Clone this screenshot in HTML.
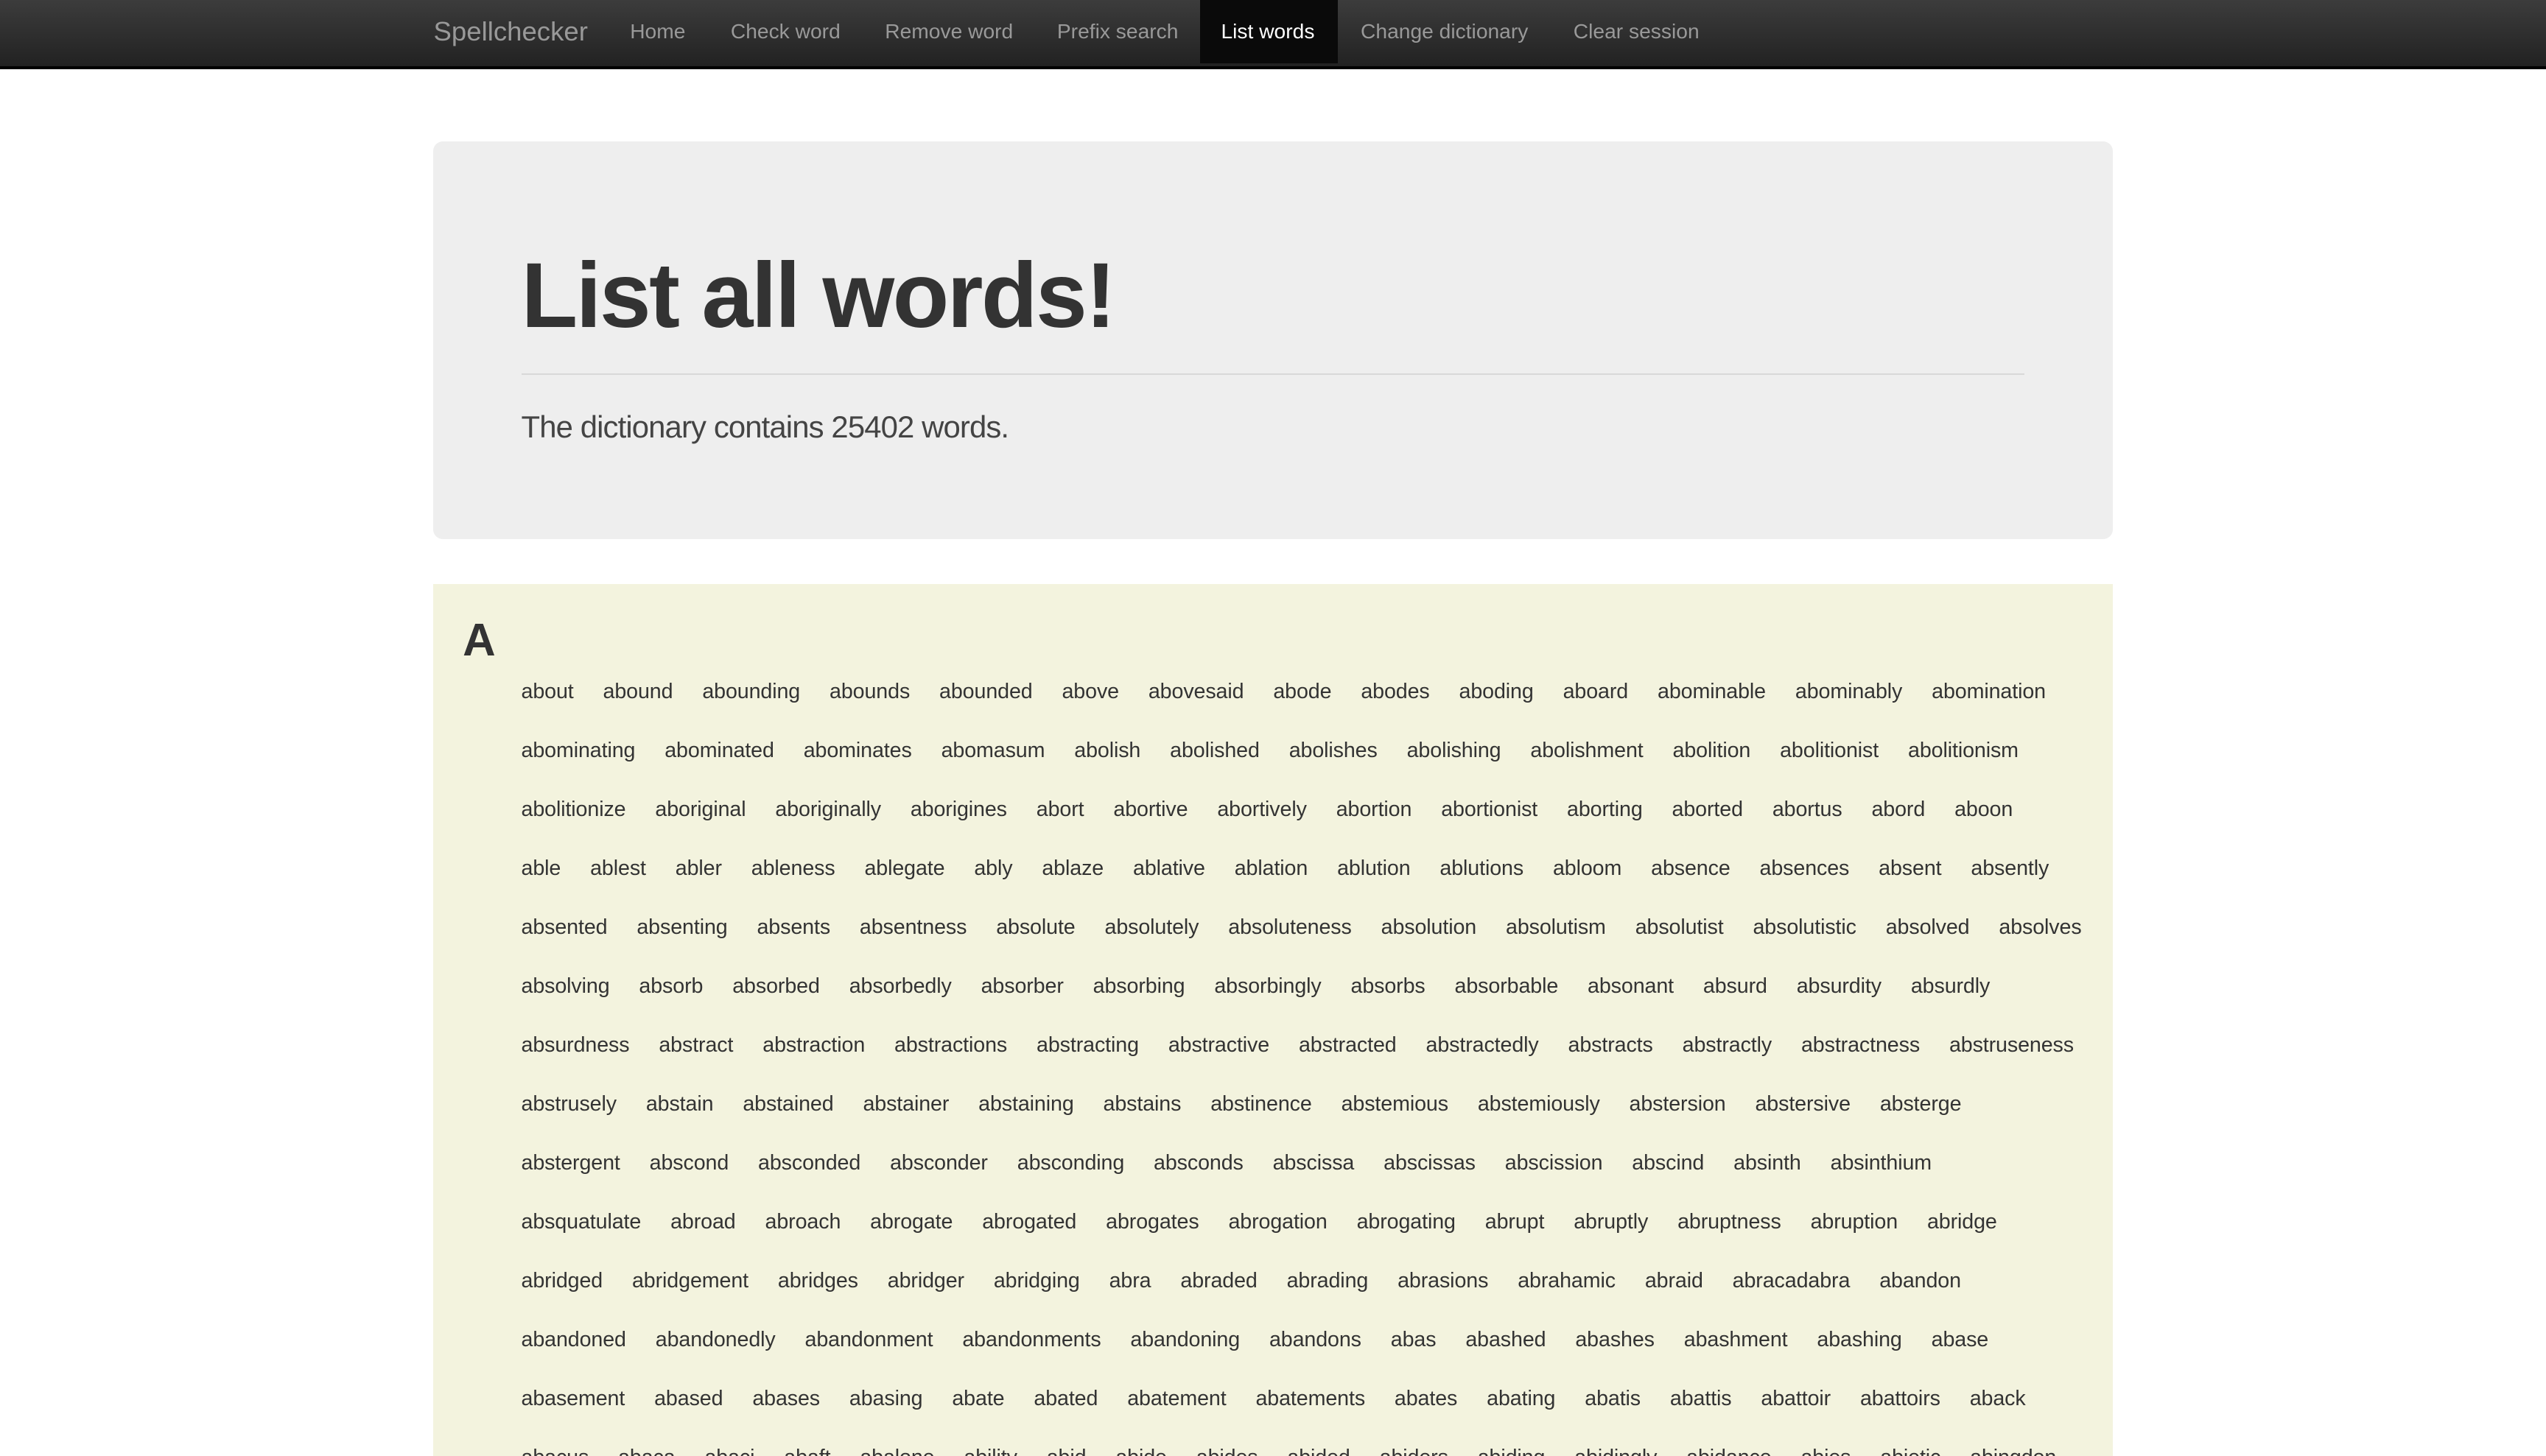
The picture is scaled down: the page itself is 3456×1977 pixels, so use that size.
<!DOCTYPE html>
<html><head><meta charset="utf-8"><style>
html{zoom:2.2041;height:897px;overflow:hidden}
body{margin:0;width:1568px;height:897px;overflow:hidden;background:#fff;font-family:"Liberation Sans",Arial,sans-serif;color:#333;position:relative}
.nav{position:absolute;left:0;top:0;width:1568px;height:41px;background:linear-gradient(#3c3c3c,#222);border-bottom:2px solid #000}
.nav span{position:absolute;top:0;line-height:39px;font-size:12.8px;color:#999;white-space:nowrap}
.nav .brand{font-size:16.6px;left:267px;color:#999}
.nav .act{background:#0a0a0a;color:#fff;padding:0 13px;left:739px;width:59px}
.jumbo{position:absolute;left:267px;top:87px;width:1034px;height:245px;background:#eee;border-radius:6px}
.jumbo h1{position:absolute;left:54px;top:60px;margin:0;font-size:57px;line-height:70px;font-weight:bold;color:#333;letter-spacing:-1.2px;white-space:nowrap}
.jumbo hr{position:absolute;left:54px;top:143px;width:926px;margin:0;border:0;border-top:1px solid #d8d8d8}
.jumbo p{position:absolute;left:54px;top:163px;margin:0;font-size:19px;line-height:26px;color:#444;font-weight:300;letter-spacing:-0.4px}
.words{position:absolute;left:267px;top:360px;width:1034px;height:537px;background:#f3f3de}
.words h2{position:absolute;left:18px;top:18px;margin:0;font-size:28px;line-height:34px;font-weight:bold}
.row{position:absolute;left:54px;font-size:13px;line-height:20px;white-space:nowrap;color:#333;letter-spacing:-0.05px}
.row i{font-style:normal;margin-right:18.1px}
</style></head><body>
<div class="nav">
<span class="brand">Spellchecker</span>
<span style="left:388px">Home</span>
<span style="left:450px">Check word</span>
<span style="left:545px">Remove word</span>
<span style="left:651px">Prefix search</span>
<span class="act">List words</span>
<span style="left:838px">Change dictionary</span>
<span style="left:969px">Clear session</span>
</div>
<div class="jumbo">
<h1>List all words!</h1>
<hr>
<p>The dictionary contains 25402 words.</p>
</div>
<div class="words">
<h2>A</h2>
<div class="row" style="top:56px"><i>about</i><i>abound</i><i>abounding</i><i>abounds</i><i>abounded</i><i>above</i><i>abovesaid</i><i>abode</i><i>abodes</i><i>aboding</i><i>aboard</i><i>abominable</i><i>abominably</i><i>abomination</i></div>
<div class="row" style="top:92.3px"><i>abominating</i><i>abominated</i><i>abominates</i><i>abomasum</i><i>abolish</i><i>abolished</i><i>abolishes</i><i>abolishing</i><i>abolishment</i><i>abolition</i><i>abolitionist</i><i>abolitionism</i></div>
<div class="row" style="top:128.6px"><i>abolitionize</i><i>aboriginal</i><i>aboriginally</i><i>aborigines</i><i>abort</i><i>abortive</i><i>abortively</i><i>abortion</i><i>abortionist</i><i>aborting</i><i>aborted</i><i>abortus</i><i>abord</i><i>aboon</i></div>
<div class="row" style="top:164.9px"><i>able</i><i>ablest</i><i>abler</i><i>ableness</i><i>ablegate</i><i>ably</i><i>ablaze</i><i>ablative</i><i>ablation</i><i>ablution</i><i>ablutions</i><i>abloom</i><i>absence</i><i>absences</i><i>absent</i><i>absently</i></div>
<div class="row" style="top:201.2px"><i>absented</i><i>absenting</i><i>absents</i><i>absentness</i><i>absolute</i><i>absolutely</i><i>absoluteness</i><i>absolution</i><i>absolutism</i><i>absolutist</i><i>absolutistic</i><i>absolved</i><i>absolves</i></div>
<div class="row" style="top:237.5px"><i>absolving</i><i>absorb</i><i>absorbed</i><i>absorbedly</i><i>absorber</i><i>absorbing</i><i>absorbingly</i><i>absorbs</i><i>absorbable</i><i>absonant</i><i>absurd</i><i>absurdity</i><i>absurdly</i></div>
<div class="row" style="top:273.8px"><i>absurdness</i><i>abstract</i><i>abstraction</i><i>abstractions</i><i>abstracting</i><i>abstractive</i><i>abstracted</i><i>abstractedly</i><i>abstracts</i><i>abstractly</i><i>abstractness</i><i>abstruseness</i></div>
<div class="row" style="top:310.1px"><i>abstrusely</i><i>abstain</i><i>abstained</i><i>abstainer</i><i>abstaining</i><i>abstains</i><i>abstinence</i><i>abstemious</i><i>abstemiously</i><i>abstersion</i><i>abstersive</i><i>absterge</i></div>
<div class="row" style="top:346.4px"><i>abstergent</i><i>abscond</i><i>absconded</i><i>absconder</i><i>absconding</i><i>absconds</i><i>abscissa</i><i>abscissas</i><i>abscission</i><i>abscind</i><i>absinth</i><i>absinthium</i></div>
<div class="row" style="top:382.7px"><i>absquatulate</i><i>abroad</i><i>abroach</i><i>abrogate</i><i>abrogated</i><i>abrogates</i><i>abrogation</i><i>abrogating</i><i>abrupt</i><i>abruptly</i><i>abruptness</i><i>abruption</i><i>abridge</i></div>
<div class="row" style="top:419px"><i>abridged</i><i>abridgement</i><i>abridges</i><i>abridger</i><i>abridging</i><i>abra</i><i>abraded</i><i>abrading</i><i>abrasions</i><i>abrahamic</i><i>abraid</i><i>abracadabra</i><i>abandon</i></div>
<div class="row" style="top:455.3px"><i>abandoned</i><i>abandonedly</i><i>abandonment</i><i>abandonments</i><i>abandoning</i><i>abandons</i><i>abas</i><i>abashed</i><i>abashes</i><i>abashment</i><i>abashing</i><i>abase</i></div>
<div class="row" style="top:491.6px"><i>abasement</i><i>abased</i><i>abases</i><i>abasing</i><i>abate</i><i>abated</i><i>abatement</i><i>abatements</i><i>abates</i><i>abating</i><i>abatis</i><i>abattis</i><i>abattoir</i><i>abattoirs</i><i>aback</i></div>
<div class="row" style="top:527.9px"><i>abacus</i><i>abaca</i><i>abaci</i><i>abaft</i><i>abalone</i><i>ability</i><i>abid</i><i>abide</i><i>abides</i><i>abided</i><i>abiders</i><i>abiding</i><i>abidingly</i><i>abidance</i><i>abies</i><i>abietic</i><i>abingdon</i></div>
</div>
</body></html>
